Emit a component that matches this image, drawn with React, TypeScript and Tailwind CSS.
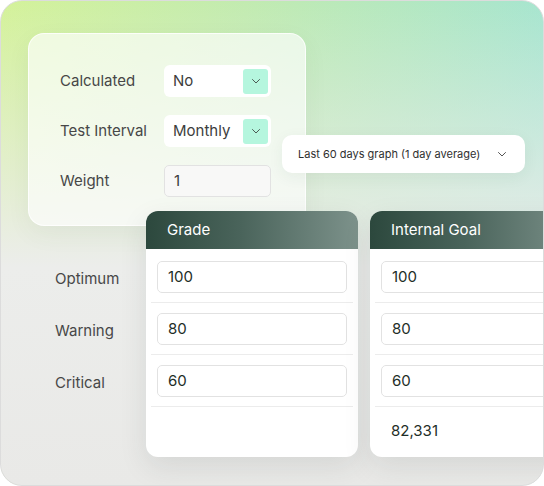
import React from 'react';

const font = { fontFamily: 'Inter, "Noto Sans", sans-serif' };

function Chevron({ className = '' }: { className?: string }) {
  return (
    <svg viewBox="0 0 12 12" className={className} fill="none" stroke="currentColor" strokeWidth="1" strokeLinecap="round" strokeLinejoin="round">
      <path d="M2.5 4.5 6 8 9.5 4.5" />
    </svg>
  );
}

function Select({ value }: { value: string }) {
  return (
    <div className="w-[107px] h-[32px] bg-white rounded-[6px] flex items-center pl-[9px] pr-[3px]">
      <span className="text-[15px] text-[#3d3d3d]">{value}</span>
      <div className="ml-auto w-[25px] h-[25px] rounded-[3px] bg-[#b5f6de] flex items-center justify-center text-[#4b5a54]">
        <Chevron className="w-[12px] h-[12px]" />
      </div>
    </div>
  );
}

function Field({ label, children }: { label: string; children: React.ReactNode }) {
  return (
    <div className="flex items-center h-[32px]">
      <span className="w-[104px] text-[15px] text-[#474747]">{label}</span>
      {children}
    </div>
  );
}

function ValueCard({ title, values, total }: { title: string; values: string[]; total?: string }) {
  return (
    <div className="w-[212px] shrink-0 h-[246px] bg-white rounded-[12px] overflow-hidden shadow-[0_10px_28px_rgba(40,50,45,0.10)] flex flex-col">
      <div className="h-[38px] flex items-center pl-[21px] bg-[linear-gradient(90deg,#2c483d_0%,#4a645b_45%,#7d928b_100%)]">
        <span className="text-[15px] text-white">{title}</span>
      </div>
      <div className="pt-[2px] px-[5px]">
        {values.map((v) => (
          <div key={v} className="pt-[10px] pb-[9px] px-[6px] border-b border-[#ececec]">
            <div className="h-[32px] border border-[#e2e2e2] rounded-[5px] flex items-center pl-[10px] text-[15px] text-[#1e2e27]">
              {v}
            </div>
          </div>
        ))}
        <div className="h-[48px] flex items-center pl-[16px] text-[15px] text-[#1e2e27]">{total}</div>
      </div>
    </div>
  );
}

export default function App() {
  return (
    <div style={font} className="w-[544px] h-[486px] bg-white">
      <div className="w-[544px] h-[486px] rounded-[22px] border border-[#dcdcdc] overflow-hidden bg-[linear-gradient(180deg,rgba(236,237,235,0)_0%,rgba(236,237,235,0.5)_28%,#ecedeb_55%,#e9e9e7_100%),linear-gradient(90deg,#d4f29a_0%,#c2ebb0_45%,#a7e5cf_100%)]">
        <div className="flex items-start">
          <div className="ml-[27px] mt-[32px] w-[278px] h-[193px] rounded-[16px] border border-white/80 bg-white/65 shadow-[0_8px_24px_rgba(60,80,60,0.06)] pl-[31px] pt-[31px] flex flex-col gap-[18px]">
            <Field label="Calculated">
              <Select value="No" />
            </Field>
            <Field label="Test Interval">
              <Select value="Monthly" />
            </Field>
            <Field label="Weight">
              <div className="w-[107px] h-[32px] bg-[#f8f8f7] border border-[#e2e2e2] rounded-[5px] flex items-center pl-[9px] text-[15px] text-[#3d3d3d]">
                1
              </div>
            </Field>
          </div>
          <div className="ml-[-24px] mt-[134px] w-[243px] h-[38px] shrink-0 bg-white rounded-[10px] shadow-[0_4px_16px_rgba(40,60,50,0.06)] flex items-center pl-[16px] pr-[17px] relative">
            <span className="text-[11px] text-[#2f2f2f] whitespace-nowrap">Last 60 days graph (1 day average)</span>
            <Chevron className="ml-auto w-[12px] h-[12px] text-[#555]" />
          </div>
        </div>
        <div className="flex mt-[-15px] relative">
          <div className="w-[145px] shrink-0 pl-[54px] pt-[52px] flex flex-col gap-[20px]">
            {['Optimum', 'Warning', 'Critical'].map((l) => (
              <div key={l} className="h-[32px] flex items-center text-[15px] text-[#474747]">
                {l}
              </div>
            ))}
          </div>
          <div className="flex gap-[12px]">
            <ValueCard title="Grade" values={['100', '80', '60']} />
            <ValueCard title="Internal Goal" values={['100', '80', '60']} total="82,331" />
          </div>
        </div>
      </div>
    </div>
  );
}
